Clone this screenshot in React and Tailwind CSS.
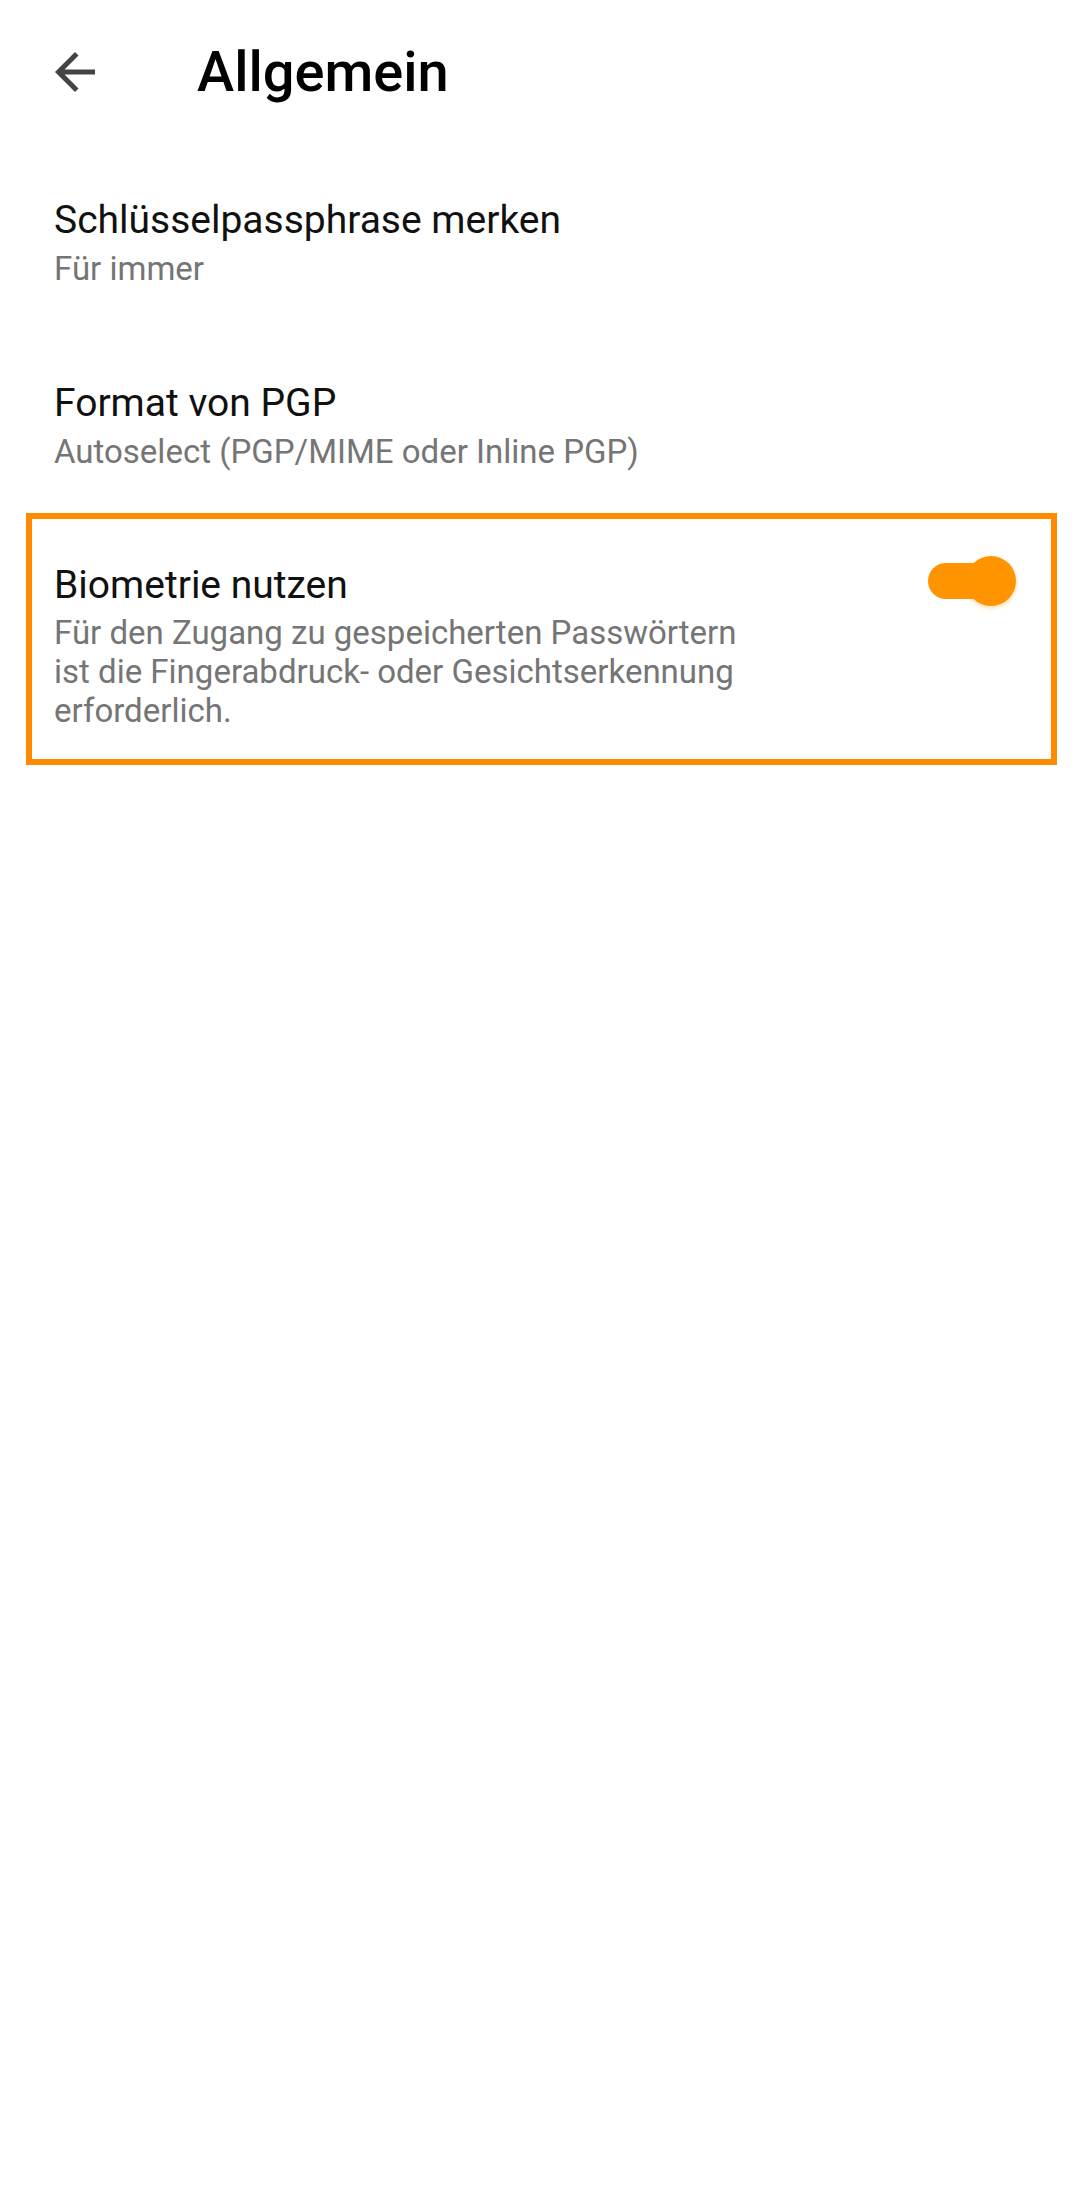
export default function App() {
  return (
    <div className="w-[1080px] h-[2185px] bg-white font-['Roboto',sans-serif] text-black">
      <header className="h-[144px] flex items-center">
        <div className="ml-[45px] w-[60px] h-[60px] flex items-center justify-center text-[#444444]">
          <svg viewBox="0 0 24 24" width="60" height="60" fill="currentColor">
            <path d="M20 11H7.83l5.59-5.59L12 4l-8 8 8 8 1.41-1.41L7.83 13H20v-2z" />
          </svg>
        </div>
        <h1 className="ml-[92px] text-[56px] leading-[64px] font-medium text-black">Allgemein</h1>
      </header>

      <div className="pl-[54px] pt-[53px]">
        <div className="text-[39px] leading-[47px] text-[#111111]">Schlüsselpassphrase merken</div>
        <div className="mt-[5px] text-[33px] leading-[39px] text-[#757575]">Für immer</div>
      </div>

      <div className="pl-[54px] mt-[92px]">
        <div className="text-[39px] leading-[47px] text-[#111111]">Format von PGP</div>
        <div className="mt-[5px] text-[33px] leading-[39px] text-[#757575]">Autoselect (PGP/MIME oder Inline PGP)</div>
      </div>

      <div className="mt-[42px] ml-[26px] w-[1031px] border-[6px] border-[#ff8a00] flex items-start">
        <div className="pl-[22px] pt-[43px] pb-[29px] w-[722px]">
          <div className="text-[39px] leading-[47px] text-[#111111]">Biometrie nutzen</div>
          <div className="mt-[4px] text-[33px] leading-[39px] text-[#757575]">
            Für den Zugang zu gespeicherten Passwörtern ist die Fingerabdruck- oder Gesichtserkennung erforderlich.
          </div>
        </div>
        <div className="ml-auto mr-[35px] mt-[37px] relative w-[88px] h-[50px]">
          <div className="absolute left-0 top-[7px] w-[80px] h-[36px] rounded-full bg-[#ff9400]" />
          <div className="absolute right-0 top-0 w-[50px] h-[50px] rounded-full bg-[#ff9400] shadow-[0_2px_4px_rgba(255,148,0,0.35)]" />
        </div>
      </div>
    </div>
  );
}
